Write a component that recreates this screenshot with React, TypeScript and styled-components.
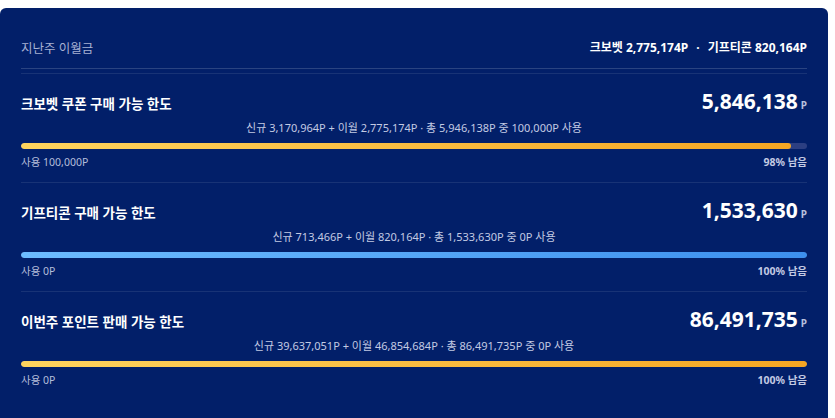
import React from 'react';
import styled, { createGlobalStyle } from 'styled-components';

const GlobalStyle = createGlobalStyle`
  html, body {
    margin: 0;
    padding: 0;
    background: #ffffff;
  }
  body {
    font-family: 'Noto Sans', 'Noto Sans CJK KR', sans-serif;
  }
`;

const Card = styled.div`
  width: 828px;
  margin-top: 8px;
  box-sizing: border-box;
  padding: 0 21px 24px 21px;
  background: #021f69;
  border-radius: 6px;
  color: #ffffff;
`;

const Header = styled.div`
  display: flex;
  align-items: center;
  justify-content: space-between;
  height: 18px;
  padding: 30px 0 12px;
  border-bottom: 1px solid rgba(255, 255, 255, 0.16);
  margin-bottom: 4px;
`;

const HeaderLabel = styled.span`
  font-size: 12.5px;
  color: #a7b1d3;
`;

const HeaderCarry = styled.span`
  font-size: 12px;
  font-weight: 700;
  color: #ffffff;
`;

const Dot = styled.span`
  margin: 0 8px;
`;

const Section = styled.section`
  padding: 16px 0 13px;
  border-top: 1px solid rgba(255, 255, 255, 0.09);
`;

const TopRow = styled.div`
  display: flex;
  align-items: center;
  justify-content: space-between;
  height: 26px;
`;

const Title = styled.h3`
  margin: 0;
  font-size: 13.5px;
  font-weight: 700;
  color: #ffffff;
`;

const Amount = styled.div`
  display: flex;
  align-items: baseline;
  font-size: 21px;
  font-weight: 700;
  line-height: 26px;
  color: #ffffff;
`;

const Unit = styled.span`
  margin-left: 3px;
  font-size: 10px;
  font-weight: 700;
  color: #b7c0de;
`;

const Detail = styled.div`
  margin-top: 4px;
  text-align: center;
  font-size: 11px;
  line-height: 16px;
  color: #c3cae3;
`;

const Track = styled.div`
  margin-top: 7px;
  height: 6px;
  border-radius: 3px;
  background: #2c3f82;
  overflow: hidden;
`;

const Fill = styled.div<{ $tone: 'gold' | 'blue' }>`
  height: 100%;
  border-radius: 3px;
  background: ${(p) =>
    p.$tone === 'blue'
      ? 'linear-gradient(90deg, #6dbcff 0%, #3d90ee 100%)'
      : 'linear-gradient(90deg, #ffd45e 0%, #f5a623 100%)'};
`;

const LabelRow = styled.div`
  display: flex;
  justify-content: space-between;
  margin-top: 6px;
  font-size: 10.5px;
  line-height: 14px;
`;

const Used = styled.span`
  color: #b4bdda;
`;

const Left = styled.span`
  font-weight: 700;
  color: #c3cae3;
`;

type Limit = {
  title: string;
  amount: string;
  detail: string;
  used: string;
  percent: number;
  tone: 'gold' | 'blue';
};

const limits: Limit[] = [
  {
    title: '크보벳 쿠폰 구매 가능 한도',
    amount: '5,846,138',
    detail: '신규 3,170,964P + 이월 2,775,174P · 총 5,946,138P 중 100,000P 사용',
    used: '사용 100,000P',
    percent: 98,
    tone: 'gold',
  },
  {
    title: '기프티콘 구매 가능 한도',
    amount: '1,533,630',
    detail: '신규 713,466P + 이월 820,164P · 총 1,533,630P 중 0P 사용',
    used: '사용 0P',
    percent: 100,
    tone: 'blue',
  },
  {
    title: '이번주 포인트 판매 가능 한도',
    amount: '86,491,735',
    detail: '신규 39,637,051P + 이월 46,854,684P · 총 86,491,735P 중 0P 사용',
    used: '사용 0P',
    percent: 100,
    tone: 'gold',
  },
];

export default function App() {
  return (
    <>
      <GlobalStyle />
      <Card>
        <Header>
          <HeaderLabel>지난주 이월금</HeaderLabel>
          <HeaderCarry>
            크보벳 2,775,174P<Dot>·</Dot>기프티콘 820,164P
          </HeaderCarry>
        </Header>
        {limits.map((l) => (
          <Section key={l.title}>
            <TopRow>
              <Title>{l.title}</Title>
              <Amount>
                {l.amount}
                <Unit>P</Unit>
              </Amount>
            </TopRow>
            <Detail>{l.detail}</Detail>
            <Track>
              <Fill $tone={l.tone} style={{ width: `${l.percent}%` }} />
            </Track>
            <LabelRow>
              <Used>{l.used}</Used>
              <Left>{l.percent}% 남음</Left>
            </LabelRow>
          </Section>
        ))}
      </Card>
    </>
  );
}
